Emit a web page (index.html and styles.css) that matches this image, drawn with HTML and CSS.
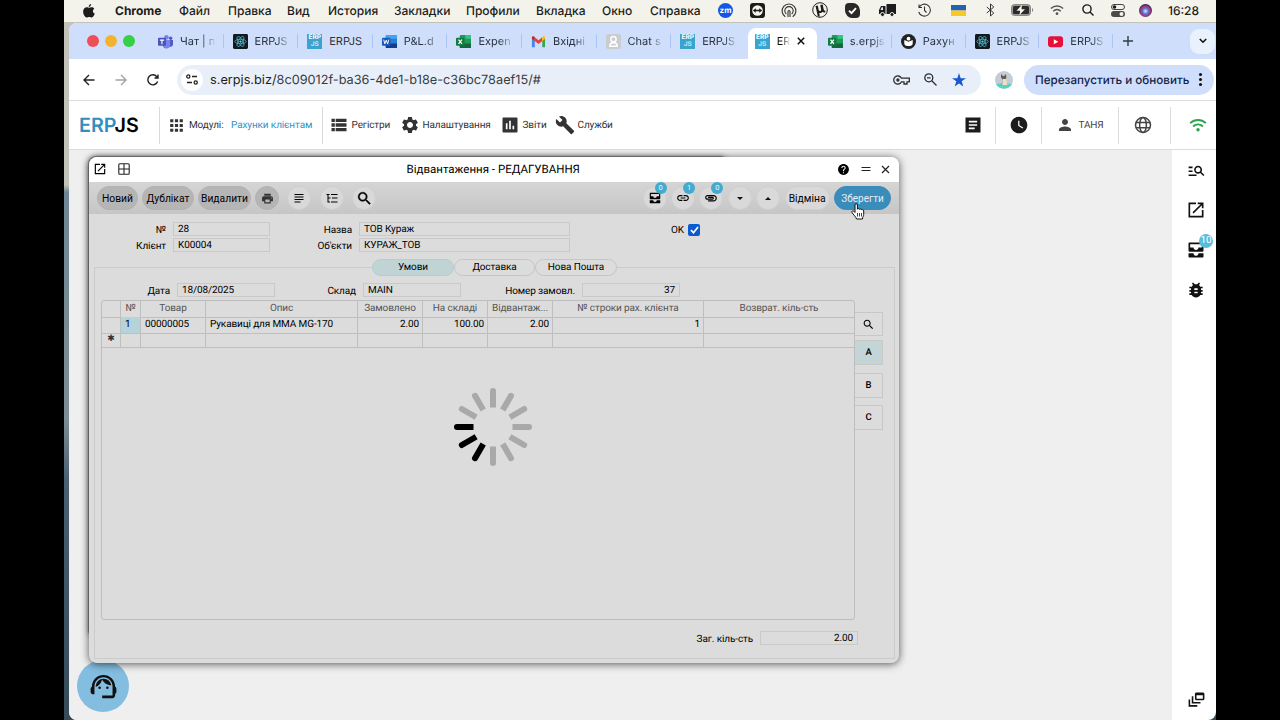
FILE: index.html
```html
<!DOCTYPE html>
<html lang="uk">
<head>
  <meta charset="UTF-8">
  <meta name="viewport" content="width=device-width, initial-scale=1.0">
  <title>ERPJS</title>
  <link rel="stylesheet" href="styles.css">
</head>
<body>
  <!-- Icon sprite -->
  <svg class="sprite">
    <symbol id="i-apps" viewBox="0 0 24 24"><path d="M4 8h4V4H4v4zm6 12h4v-4h-4v4zm-6 0h4v-4H4v4zm0-6h4v-4H4v4zm6 0h4v-4h-4v4zm6-10v4h4V4h-4zm-6 4h4V4h-4v4zm6 6h4v-4h-4v4zm0 6h4v-4h-4v4z"/></symbol>
    <symbol id="i-list" viewBox="0 0 24 24"><path d="M3 14h4v-4H3v4zm0 5.500h4v-4H3v4zM3 8.500h4v-4H3v4zm5 5.500h13v-4H8v4zm0 5.500h13v-4H8v4zM8 4.500v4h13v-4H8z"/></symbol>
    <symbol id="i-settings" viewBox="0 0 24 24"><path d="M19.140 12.940c.04-.3.06-.61.06-.94 0-.32-.02-.64-.07-.94l2.030-1.580c.18-.14.23-.41.12-.61l-1.920-3.320c-.12-.22-.37-.29-.59-.22l-2.390.96c-.5-.38-1.030-.7-1.620-.94l-.36-2.540c-.04-.24-.24-.41-.48-.41h-3.840c-.24 0-.43.17-.47.41l-.36 2.540c-.59.24-1.130.57-1.620.94l-2.390-.96c-.22-.08-.47 0-.59.22L2.740 8.870c-.12.21-.08.47.12.61l2.030 1.580c-.05.3-.09.63-.09.94s.02.64.07.94l-2.030 1.580c-.18.14-.23.41-.12.61l1.920 3.320c.12.22.37.29.59.22l2.390-.96c.5.38 1.030.7 1.620.94l.36 2.540c.05.24.24.41.48.41h3.840c.24 0 .44-.17.47-.41l.36-2.540c.59-.24 1.130-.56 1.620-.94l2.390.96c.22.08.47 0 .59-.22l1.920-3.320c.12-.22.07-.47-.12-.61l-2.010-1.580zM12 15.600c-1.980 0-3.600-1.620-3.600-3.600s1.620-3.600 3.600-3.600 3.600 1.620 3.600 3.600-1.620 3.600-3.600 3.600z"/></symbol>
    <symbol id="i-chart" viewBox="0 0 24 24"><path d="M20 3H4c-.6 0-1 .4-1 1v16c0 .6.4 1 1 1h16c.6 0 1-.4 1-1V4c0-.6-.4-1-1-1zM9 17H7v-7h2v7zm4 0h-2V7h2v10zm4 0h-2v-4h2v4z"/></symbol>
    <symbol id="i-build" viewBox="0 0 24 24"><path d="M22.700 19l-9.100-9.100c.9-2.300.4-5-1.500-6.900-2-2-5-2.400-7.400-1.300L9 6 6 9 1.600 4.700C.4 7.100.9 10.100 2.900 12.100c1.900 1.900 4.600 2.400 6.900 1.500l9.100 9.100c.4.4 1 .4 1.400 0l2.300-2.300c.5-.4.5-1.100.1-1.400z"/></symbol>
    <symbol id="i-article" viewBox="0 0 24 24"><path d="M21 3H3v18h18zM14 17H7v-2h7v2zm3-4H7v-2h10v2zm0-4H7V7h10v2z"/></symbol>
    <symbol id="i-clock" viewBox="0 0 24 24"><path d="M12 2C6.500 2 2 6.500 2 12s4.500 10 10 10 10-4.500 10-10S17.500 2 12 2zm4.200 14.200L11 13V7h1.500v5.200l4.500 2.700-.8 1.300z"/></symbol>
    <symbol id="i-person" viewBox="0 0 24 24"><path d="M12 12c2.210 0 4-1.790 4-4s-1.790-4-4-4-4 1.790-4 4 1.790 4 4 4zm0 2c-2.670 0-8 1.340-8 4v2h16v-2c0-2.660-5.330-4-8-4z"/></symbol>
    <symbol id="i-globe" viewBox="0 0 24 24"><g fill="none" stroke="currentColor" stroke-width="2"><circle cx="12" cy="12" r="10"/><ellipse cx="12" cy="12" rx="4.500" ry="10"/><path d="M2.500 8.500h19M2.500 15.500h19"/></g></symbol>
    <symbol id="i-wifi" viewBox="0 0 24 24"><g fill="none" stroke="currentColor" stroke-width="2.500"><path d="M1.500 9.500c6-5.600 15-5.600 21 0M5.500 14c3.800-3.600 9.200-3.600 13 0"/></g><circle cx="12" cy="18.300" r="2.300"/></symbol>
    <symbol id="i-msearch" viewBox="0 0 24 24"><path d="M7 9H2V7h5v2zm0 3H2v2h5v-2zm13.590 7l-3.830-3.830c-.8.52-1.740.83-2.760.83-2.760 0-5-2.240-5-5s2.240-5 5-5 5 2.240 5 5c0 1.020-.31 1.960-.83 2.750L22 17.590 20.590 19zM17 11c0-1.650-1.350-3-3-3s-3 1.350-3 3 1.350 3 3 3 3-1.350 3-3zM2 19h10v-2H2v2z"/></symbol>
    <symbol id="i-open" viewBox="0 0 24 24"><path d="M19 19H5V5h7V3H3v18h18v-9h-2v7zM14 3v2h3.590l-9.830 9.830 1.410 1.410L19 6.410V10h2V3h-7z"/></symbol>
    <symbol id="i-inbox" viewBox="0 0 24 24"><path d="M20 3H4c-.6 0-1 .4-1 1v9c0 .6.4 1 1 1h16c.6 0 1-.4 1-1V4c0-.6-.4-1-1-1zm-1 6h-4c0 1.620-1.380 3-3 3s-3-1.380-3-3H5V5h14v4zm-4 7h6v4c0 .6-.4 1-1 1H4c-.6 0-1-.4-1-1v-4h6c0 1.660 1.340 3 3 3s3-1.340 3-3z"/></symbol>
    <symbol id="i-bug" viewBox="0 0 24 24"><path d="M20 8h-2.810c-.45-.78-1.070-1.450-1.820-1.960L17 4.410 15.590 3l-2.170 2.170C12.960 5.060 12.490 5 12 5c-.49 0-.96.06-1.410.17L8.410 3 7 4.410l1.620 1.630C7.880 6.550 7.260 7.220 6.810 8H4v2h2.090c-.05.33-.09.66-.09 1v1H4v2h2v1c0 .34.04.67.09 1H4v2h2.810c1.040 1.790 2.970 3 5.190 3s4.150-1.210 5.190-3H20v-2h-2.090c.05-.33.09-.66.09-1v-1h2v-2h-2v-1c0-.34-.04-.67-.09-1H20V8zm-6 8h-4v-2h4v2zm0-4h-4v-2h4v2z"/></symbol>
    <symbol id="i-print" viewBox="0 0 24 24"><path d="M19 8H5c-1.660 0-3 1.340-3 3v6h4v4h12v-4h4v-6c0-1.660-1.340-3-3-3zm-3 11H8v-5h8v5zm3-7c-.55 0-1-.45-1-1s.45-1 1-1 1 .45 1 1-.45 1-1 1zm-1-9H6v4h12V3z"/></symbol>
    <symbol id="i-link" viewBox="0 0 24 24"><path d="M3.900 12c0-1.710 1.390-3.100 3.100-3.100h4V7H7c-2.760 0-5 2.240-5 5s2.240 5 5 5h4v-1.900H7c-1.710 0-3.100-1.390-3.100-3.100zM8 13h8v-2H8v2zm9-6h-4v1.900h4c1.710 0 3.100 1.390 3.100 3.100s-1.390 3.100-3.100 3.100h-4V17h4c2.760 0 5-2.240 5-5s-2.240-5-5-5z"/></symbol>
    <symbol id="i-clip" viewBox="0 0 24 24"><path d="M2 12.500C2 9.460 4.460 7 7.500 7H18c2.210 0 4 1.790 4 4s-1.790 4-4 4H9.500C8.120 15 7 13.880 7 12.500S8.120 10 9.500 10H17v2H9.410c-.55 0-.55 1 0 1H18c1.100 0 2-.9 2-2s-.9-2-2-2H7.500C5.570 9 4 10.570 4 12.500S5.570 16 7.500 16H17v2H7.500C4.460 18 2 15.540 2 12.500z"/></symbol>
    <symbol id="i-search" viewBox="0 0 24 24"><path d="M15.500 14h-.79l-.28-.27C15.410 12.590 16 11.110 16 9.500 16 5.910 13.090 3 9.500 3S3 5.910 3 9.500 5.910 16 9.500 16c1.610 0 3.090-.59 4.230-1.570l.27.28v.79l5 4.990L20.490 19l-4.990-5zm-6 0C7.010 14 5 11.990 5 9.500S7.010 5 9.500 5 14 7.010 14 9.500 11.990 14 9.500 14z"/></symbol>
    <symbol id="i-lines" viewBox="0 0 24 24"><path d="M3 4h18v2H3zM3 9h18v2H3zM3 14h18v2H3zM3 19h12v2H3z"/></symbol>
    <symbol id="i-tree" viewBox="0 0 24 24"><path d="M1 4h6v2H1zM10 4h13v2H10zM12 11h11v2H12zM10 19h13v2H10zM3 5h2v16H3zM3 11h6v2H3zM3 19h5v2H3z"/></symbol>
    <symbol id="i-agent" viewBox="0 0 24 24"><path d="M21 12.220C21 6.730 16.740 3 12 3c-4.690 0-9 3.650-9 9.280-.6.34-1 .98-1 1.720v2c0 1.100.9 2 2 2h1v-6.100c0-3.870 3.130-7 7-7s7 3.130 7 7V19h-8v2h8c1.100 0 2-.9 2-2v-1.220c.59-.31 1-.92 1-1.640v-2.300c0-.7-.41-1.310-1-1.620z"/><circle cx="9" cy="13" r="1"/><circle cx="15" cy="13" r="1"/><path d="M18 11.030C17.520 8.180 15.040 6 12.050 6c-3.030 0-6.290 2.510-6.030 6.450 2.470-1.010 4.330-3.210 4.860-5.890 1.310 2.630 4 4.440 7.120 4.470z"/></symbol>
    <symbol id="i-feed" viewBox="0 0 24 24"><path d="M8 8H6v9h11v-2H8V8zM20 3h-8c-1.100 0-2 .9-2 2v6c0 1.100.9 2 2 2h8c1.100 0 2-.9 2-2V5c0-1.100-.9-2-2-2zm0 8h-8V6.500h8V11zM4 12H2v9h11v-2H4v-7z"/></symbol>
    <symbol id="i-help" viewBox="0 0 24 24"><path d="M12 2C6.480 2 2 6.480 2 12s4.480 10 10 10 10-4.480 10-10S17.520 2 12 2zm1 17h-2v-2h2v2zm2.070-7.750l-.9.920C13.450 12.900 13 13.500 13 15h-2v-.5c0-1.100.45-2.100 1.170-2.830l1.240-1.260c.37-.36.59-.86.59-1.410 0-1.100-.9-2-2-2s-2 .9-2 2H8c0-2.210 1.790-4 4-4s4 1.790 4 4c0 .88-.36 1.680-.93 2.250z"/></symbol>
    <symbol id="i-excel" viewBox="0 0 16 16"><rect x="4" y="1" width="12" height="14" rx="1" fill="#1f9a58"/><path d="M10 1h5a1 1 0 0 1 1 1v3h-6z" fill="#35c481"/><path d="M4 10h12v4a1 1 0 0 1-1 1H5a1 1 0 0 1-1-1z" fill="#15683c"/><rect y="4" width="9" height="8.500" rx="1" fill="#107c41"/><path d="M2.700 6l3.600 4.600M6.300 6L2.700 10.600" stroke="#fff" stroke-width="1.400"/></symbol>
    <symbol id="i-react" viewBox="0 0 16 16"><rect width="16" height="16" rx="1.500" fill="#14191d"/><g fill="none" stroke="#4fb3c4" stroke-width=".9"><ellipse cx="8" cy="8" rx="6" ry="2.400"/><ellipse cx="8" cy="8" rx="6" ry="2.400" transform="rotate(60 8 8)"/><ellipse cx="8" cy="8" rx="6" ry="2.400" transform="rotate(120 8 8)"/></g><circle cx="8" cy="8" r="1.200" fill="#61dafb"/></symbol>
  </svg>

  <div class="screen">
    <header class="menubar">
      <svg class="apple" width="12" height="14" viewBox="0 0 12 14"><path d="M8.100 0c.1 1.500-1.100 2.900-2.400 2.900C5.500 1.500 6.800.2 8.100 0zM11.300 4.700c-2.100 1.300-1.700 4 .5 4.900-.5 1.500-1.700 3.900-3 3.900-1 0-1.300-.6-2.500-.6s-1.600.6-2.500.6C2 13.500.1 10.300.1 7.500c0-4 3.700-5 5.200-3.900.8.300 1 .3 1.800 0 1.300-.6 3.200-.4 4.200 1.100z"/></svg>
      <nav class="menu">
        <strong>Chrome</strong>
        <span>Файл</span>
        <span>Правка</span>
        <span>Вид</span>
        <span>История</span>
        <span>Закладки</span>
        <span>Профили</span>
        <span>Вкладка</span>
        <span>Окно</span>
        <span>Справка</span>
      </nav>
      <div class="status">
        <span class="zoom-app">zm</span>
        <svg width="15" height="15" viewBox="0 0 15 15"><rect width="15" height="15" rx="3" fill="#1c1c1a"/><circle cx="7.500" cy="7.500" r="5.300" fill="#f4f3ec"/><path d="M2.800 7.500l3-2.300v1.500h3.400V5.200l3 2.300-3 2.300V8.300H5.800v1.500z"/></svg>
        <svg width="16" height="15" viewBox="0 0 16 15" fill="none" stroke="#333" stroke-width="1.100"><path d="M4.300 13.700a6.900 6.900 0 1 1 7.400 0M5.300 11a4.200 4.200 0 1 1 5.400 0M7 14V8.500a1 1 0 0 1 2 0V14"/></svg>
        <svg width="16" height="16" viewBox="0 0 16 16"><circle cx="8" cy="8" r="7.300" fill="none" stroke="#222"/><path d="M3.500 4l2.300-.4.900 4.500c.3 1.500 2.600 1.300 2.400-.3L8.300 3l2.400-.4 1 5c.2 1 .7 1.200 1.400 1l.4 1.400c-1 .8-2.300.7-3-.2-1 1.400-2.500 1.500-3.300.9l.6 4-2-.4z"/></svg>
        <svg width="15" height="15" viewBox="0 0 15 15"><path d="M0 4a4 4 0 0 1 4-4h3a7.500 7.500 0 0 1 8 7.500V11a4 4 0 0 1-4 4H8a7.500 7.500 0 0 1-8-7.500z" fill="#292927"/><path d="M4 7.700l2.500 2.500L11 5.200" fill="none" stroke="#fff" stroke-width="1.900"/></svg>
        <svg width="17" height="14" viewBox="0 0 17 14"><path d="M7.500 1H17v10H7.500zM0 7l2-4h4.500v8H0z"/><path d="M1.500 7l1.200-2.700H4V7z" fill="#eee"/><circle cx="3.500" cy="11.500" r="2" stroke="#eee"/><circle cx="13" cy="11.500" r="2" stroke="#eee"/></svg>
        <svg width="14" height="14" viewBox="0 0 14 14" fill="none" stroke="#333" stroke-width="1.100"><path d="M2 4.500A6 6 0 1 1 1.700 9M2 1.500v3h3M7.500 3.500V7.500l2 2"/></svg>
        <svg width="15" height="11" viewBox="0 0 15 11"><path d="M0 0h15v5.500H0z" fill="#1f63b5"/><path d="M0 5.500h15V11H0z" fill="#f6c927"/></svg>
        <svg width="9" height="14" viewBox="0 0 9 14" fill="none" stroke="#333"><path d="M.8 4l7 6-3.300 3V1l3.300 3-7 6"/></svg>
        <svg width="23" height="12" viewBox="0 0 23 12"><rect x=".5" y=".5" width="19" height="11" rx="3" fill="#999" stroke="#888"/><rect x="2" y="2" width="16" height="8" rx="1.500" fill="#2a2a28"/><path d="M21 4c1.600.5 1.600 3.500 0 4z" fill="#888"/><path d="M11 .8L5.500 6.700h3.600L8.500 11 14 5.300h-3.500z" fill="#f4f3ec"/></svg>
        <svg width="16" height="14" viewBox="0 0 24 24"><use href="#i-wifi" class="dim"/></svg>
        <svg width="12" height="12" viewBox="0 0 12 12" fill="none" stroke="#1c1c1a" stroke-width="1.400"><circle cx="5" cy="5" r="4.100"/><path d="M8 8l3.500 3.500"/></svg>
        <svg width="14" height="13" viewBox="0 0 14 13"><rect x=".5" y=".5" width="13" height="5" rx="2.500" fill="none" stroke="#444"/><circle cx="3.500" cy="3" r="1.800"/><rect y="7" width="14" height="6" rx="3" fill="#4a4a48"/><circle cx="10.500" cy="10" r="2" fill="#f4f3ec"/></svg>
        <span class="siri"></span>
        <time>16:28</time>
      </div>
    </header>

    <div class="browser">
      <div class="tabstrip">
        <div class="lights"><i class="red"></i><i class="yellow"></i><i class="green"></i></div>
        <div class="tab">
          <svg class="fav" viewBox="0 0 16 16"><circle cx="9" cy="3.500" r="2.500" fill="#7b83eb"/><circle cx="13.500" cy="4.500" r="1.800" fill="#5059c9"/><path d="M11 6.500h5v4.500a3 3 0 0 1-4 2.500z" fill="#5059c9"/><path d="M5 6.500h8V11a4 4 0 0 1-8 1z" fill="#7b83eb"/><rect y="4" width="8.500" height="8.500" rx="1" fill="#4b53bc"/><path d="M2 6.500h4.500M4.200 6.500v4.300" stroke="#fff" stroke-width="1.200"/></svg>
          <span>Чат | п</span>
        </div>
        <div class="tab"><svg class="fav"><use href="#i-react"/></svg><span>ERPJS</span></div>
        <div class="tab"><b class="fav erp">ERP<br><i>JS</i></b><span class="full">ERPJS</span></div>
        <div class="tab">
          <svg class="fav" viewBox="0 0 16 16"><rect x="4" y="1" width="12" height="14" rx="1" fill="#2b7cd3"/><path d="M4 2a1 1 0 0 1 1-1h10a1 1 0 0 1 1 1v3H4z" fill="#41a5ee"/><path d="M4 10h12v4a1 1 0 0 1-1 1H5a1 1 0 0 1-1-1z" fill="#103f91"/><rect y="4" width="9" height="8.500" rx="1" fill="#185abd"/><path d="M1.800 6l1.200 4.500L4.500 6.500 6 10.500 7.200 6" fill="none" stroke="#fff"/></svg>
          <span>P&amp;L.d</span>
        </div>
        <div class="tab"><svg class="fav"><use href="#i-excel"/></svg><span>Expen</span></div>
        <div class="tab">
          <svg class="fav" viewBox="0 0 16 16"><path d="M1 4v10h3V7z" fill="#4285f4"/><path d="M15 4v10h-3V7z" fill="#34a853"/><path d="M4 3.500l4 3.200 4-3.200v4L8 10.600 4 7.500z" fill="#ea4335"/><path d="M1 4c0-1.600 1.800-2 3-.8v4.300L1 5z" fill="#c5221f"/><path d="M15 4c0-1.600-1.800-2-3-.8v4.300L15 5z" fill="#fbbc04"/></svg>
          <span>Вхідні</span>
        </div>
        <div class="tab">
          <svg class="fav" viewBox="0 0 16 16"><rect width="16" height="16" rx="2.500" fill="#c9cdd0"/><g fill="none" stroke="#fff" stroke-width="1.500"><circle cx="8" cy="5.500" r="2.800"/><path d="M4 13c0-5 8-5 8 0z"/></g></svg>
          <span>Chat s</span>
        </div>
        <div class="tab last"><b class="fav erp">ERP<br><i>JS</i></b><span>ERPJS</span></div>
        <div class="tab active"><b class="fav erp">ERP<br><i>JS</i></b><span>ER</span>
          <svg class="close" width="8" height="8" viewBox="0 0 8 8"><path d="M.8.8l6.400 6.400M7.200.8L.8 7.200"/></svg>
        </div>
        <div class="tab"><svg class="fav"><use href="#i-excel"/></svg><span>s.erpjs</span></div>
        <div class="tab">
          <svg class="fav" viewBox="0 0 16 16"><circle cx="8" cy="8" r="8" fill="#222"/><path d="M3.500 6.500L8 8.300l4.500-1.800v3.500c0 3.800-9 3.800-9 0z" fill="#fff"/><circle cx="8" cy="5" r="2" fill="#fff"/></svg>
          <span>Рахун</span>
        </div>
        <div class="tab"><svg class="fav"><use href="#i-react"/></svg><span>ERPJS</span></div>
        <div class="tab">
          <svg class="fav" viewBox="0 0 16 16"><rect y="2.500" width="16" height="11.500" rx="3" fill="#e5113b"/><path d="M6.200 5.500v5.400L11 8.200z" fill="#fff"/></svg>
          <span>ERPJS</span>
        </div>
        <svg class="plus" width="10" height="10" viewBox="0 0 10 10"><path d="M5 0v10M0 5h10"/></svg>
        <div class="tab-search"><svg width="8" height="6" viewBox="0 0 8 6"><path d="M.8 1l3.200 3.200L7.200 1"/></svg></div>
      </div>

      <div class="toolbar">
        <svg class="nav-icon" width="12" height="12" viewBox="0 0 12 12"><path d="M11.500 6H1M6 1L1 6l5 5"/></svg>
        <svg class="nav-icon faded" width="12" height="12" viewBox="0 0 12 12"><path d="M.5 6H11M6 1l5 5-5 5"/></svg>
        <svg class="nav-icon" width="12" height="12" viewBox="0 0 12 12"><path d="M10.600 7.500A5 5 0 1 1 9.800 2.700L11 4M11 .5V4H7.500"/></svg>
        <div class="omnibox">
          <div class="site-info"><svg width="12" height="11" viewBox="0 0 12 11" fill="none" stroke="#222" stroke-width="1.300"><circle cx="2.300" cy="2.500" r="1.600"/><path d="M6 2.500h5M1 8.500h5"/><circle cx="9.700" cy="8.500" r="1.600"/></svg></div>
          <span class="url">s.erpjs.biz/<em>8c09012f-ba36-4de1-b18e-c36bc78aef15/#</em></span>
          <svg class="key" width="17" height="10" viewBox="0 0 17 10" fill="none" stroke="#2b2d30" stroke-width="1.300"><path d="M8.500 3.200A4.100 4.100 0 1 0 8.500 6.800H11V9h3V6.800h2.300V3.200z"/><circle cx="4.900" cy="5" r="1" fill="#2b2d30"/></svg>
          <svg class="lens" width="13" height="13" viewBox="0 0 13 13" fill="none" stroke="#2b2d30" stroke-width="1.300"><circle cx="4.800" cy="4.800" r="4"/><path d="M7.800 7.800l4.700 4.700M3 4.800h3.600"/></svg>
          <svg class="star" width="14" height="14" viewBox="0 0 24 24"><path d="M12 17.800L19.400 23l-2.800-8.700L24 9h-9.100L12 0 9.100 9H0l7.400 5.300L4.600 23z"/></svg>
        </div>
        <svg class="avatar" width="18" height="18" viewBox="0 0 18 18"><circle cx="9" cy="9" r="9" fill="#c5ccd8"/><path d="M1 13c5-1 11-1 16 0-3 6-13 6-16 0z" fill="#57d3c4"/><path d="M6 3l2 2h1l2-2 .4 4-1.400 2 2.500 5H6.500L8 9 6 6.500z" fill="#6c5c50"/><path d="M8 8h3l1.500 6H7z" fill="#eadfc8"/></svg>
        <div class="relaunch">Перезапустить и обновить <i class="dots"></i></div>
      </div>

      <div class="app-header">
        <div class="logo">ERP<b>JS</b></div>
        <div class="modules"><svg width="19" height="19"><use href="#i-apps"/></svg><span>Модулі:</span><a>Рахунки клієнтам</a></div>
        <nav class="app-nav">
          <a><svg width="20" height="20"><use href="#i-list"/></svg>Регістри</a>
          <a><svg width="20" height="20"><use href="#i-settings"/></svg>Налаштування</a>
          <a><svg width="20" height="20"><use href="#i-chart"/></svg>Звіти</a>
          <a class="services"><svg width="20" height="20"><use href="#i-build"/></svg>Служби</a>
        </nav>
        <div class="cell"><svg width="20" height="20"><use href="#i-article"/></svg></div>
        <div class="cell"><svg width="20" height="20"><use href="#i-clock"/></svg></div>
        <div class="cell user"><svg width="18" height="18"><use href="#i-person"/></svg>ТАНЯ</div>
        <div class="cell"><svg width="18" height="18"><use href="#i-globe"/></svg></div>
        <div class="cell wifi"><svg width="18" height="18"><use href="#i-wifi"/></svg></div>
      </div>

      <div class="workspace">
        <div class="desk">
          <div class="back-window"></div>
          <section class="window">
            <div class="titlebar">
              <svg width="14" height="14"><use href="#i-open"/></svg>
              <svg width="12" height="12" viewBox="0 0 12 12" fill="none" stroke="#222" stroke-width="1.100"><rect x=".8" y=".8" width="10.400" height="10.400" rx="1"/><path d="M6 1v10M1 6h10"/></svg>
              <h1>Відвантаження - РЕДАГУВАННЯ</h1>
              <svg width="13" height="13"><use href="#i-help"/></svg>
              <svg width="10" height="10" viewBox="0 0 10 10" stroke="#222" stroke-width="1.200"><path d="M.5 3.500h9M.5 6.500h9"/></svg>
              <svg width="9" height="9" viewBox="0 0 9 9" stroke="#222" stroke-width="1.200"><path d="M1 1l7 7M8 1L1 8"/></svg>
            </div>

            <div class="actions">
              <button class="btn dark w-new">Новий</button>
              <button class="btn dark w-dup">Дублікат</button>
              <button class="btn dark w-del">Видалити</button>
              <button class="btn dark round"><svg width="13" height="13"><use href="#i-print"/></svg></button>
              <button class="btn round gap"><svg width="12" height="12"><use href="#i-lines"/></svg></button>
              <button class="btn round gap"><svg width="14" height="12" viewBox="0 0 24 24"><use href="#i-tree"/></svg></button>
              <button class="btn round gap bold"><svg width="17" height="17"><use href="#i-search"/></svg></button>
              <div class="actions-right">
                <button class="btn round"><svg width="14" height="14"><use href="#i-inbox"/></svg><span class="badge">0</span></button>
                <button class="btn round"><svg width="14" height="14"><use href="#i-link"/></svg><span class="badge">1</span></button>
                <button class="btn round"><svg class="flip" width="14" height="14"><use href="#i-clip"/></svg><span class="badge">0</span></button>
                <button class="btn round"><i class="down"></i></button>
                <button class="btn round"><i class="up"></i></button>
                <button class="btn w-cancel">Відміна</button>
                <button class="btn save">Зберегти
                  <svg class="cursor" width="15" height="17" viewBox="0 0 15 17"><path d="M4 9.500V2a1.200 1.200 0 0 1 2.400 0v4.200c.3-.8 1.900-.8 2.200.2.400-.7 1.800-.5 2.100.4.700-.5 2-.1 2 1.200v3.500c0 1.700-1.200 2.400-1.200 4.500H5.500C5 13.800 2.200 11.600 1 9.400.4 8 2 7.300 2.800 8.200z" fill="#fff" stroke="#111"/><path d="M6.500 10v3.500M8.500 10v3.500M10.500 10v3.500" stroke="#111" stroke-width=".8"/></svg>
                </button>
              </div>
            </div>

            <div class="form">
              <div class="head-fields">
                <label>№</label><div class="field">28</div>
                <label>Назва</label><div class="field">ТОВ Кураж</div>
                <label>OK</label><span class="check"><svg width="9" height="8" viewBox="0 0 9 8"><path d="M1 4.200l2.500 2.500L8 1"/></svg></span>
                <label>Клієнт</label><div class="field">K00004</div>
                <label>Об'єкти</label><div class="field">КУРАЖ_ТОВ</div>
              </div>

              <div class="panel">
                <div class="tabs">
                  <div class="pill selected">Умови</div>
                  <div class="pill">Доставка</div>
                  <div class="pill">Нова Пошта</div>
                </div>

                <div class="row-fields">
                  <label>Дата</label><div class="field">18/08/2025</div>
                  <label>Склад</label><div class="field">MAIN</div>
                  <label>Номер замовл.</label><div class="field num">37</div>
                </div>

                <div class="grid-area">
                  <div class="grid">
                    <div class="tr th"><span></span><span>№</span><span>Товар</span><span>Опис</span><span>Замовлено</span><span>На складі</span><span>Відвантаж...</span><span>№ строки рах. клієнта</span><span>Возврат. кіль-сть</span></div>
                    <div class="tr"><span></span><span class="sel">1</span><span>00000005</span><span>Рукавиці для MMA MG-170</span><span class="num">2.00</span><span class="num">100.00</span><span class="num">2.00</span><span class="num">1</span><span></span></div>
                    <div class="tr new"><span>✱</span><span></span><span></span><span></span><span></span><span></span><span></span><span></span><span></span></div>
                  </div>
                  <div class="side-tabs">
                    <div><svg width="13" height="13"><use href="#i-search"/></svg></div>
                    <div class="selected">A</div>
                    <div>B</div>
                    <div>C</div>
                  </div>
                </div>

                <div class="total"><label>Заг. кіль-сть</label><div class="field num">2.00</div></div>
              </div>
            </div>

            <svg class="spinner" width="80" height="80" viewBox="-40 -40 80 80">
              <defs><path id="blade" d="M19.500-3H36a3 3 0 0 1 0 6H19.500z"/></defs>
              <g fill="#a9a9a9">
                <use href="#blade"/>
                <use href="#blade" transform="rotate(30)"/>
                <use href="#blade" transform="rotate(60)"/>
                <use href="#blade" transform="rotate(90)"/>
                <use href="#blade" transform="rotate(210)"/>
                <use href="#blade" transform="rotate(240)"/>
                <use href="#blade" transform="rotate(270)"/>
                <use href="#blade" transform="rotate(300)"/>
                <use href="#blade" transform="rotate(330)"/>
              </g>
              <g fill="#000">
                <use href="#blade" transform="rotate(120)"/>
                <use href="#blade" transform="rotate(150)"/>
                <use href="#blade" transform="rotate(180)"/>
              </g>
            </svg>
          </section>
          <div class="support"><svg width="31" height="31"><use href="#i-agent"/></svg></div>
        </div>
        <aside class="rail">
          <svg width="19" height="19"><use href="#i-msearch"/></svg>
          <svg width="20" height="20"><use href="#i-open"/></svg>
          <div class="rail-inbox"><svg width="20" height="20"><use href="#i-inbox"/></svg><span>10</span></div>
          <svg width="20" height="20"><use href="#i-bug"/></svg>
          <svg class="feed" width="19" height="19"><use href="#i-feed"/></svg>
        </aside>
      </div>
    </div>
  </div>
</body>
</html>
```

FILE: styles.css
```css
* {
  box-sizing: border-box;
}

body {
  margin: 0;
  height: 720px;
  overflow: hidden;
  background: #000;
  font-family: Roboto, "Liberation Sans", sans-serif;
  text-rendering: geometricPrecision;
  color: #111;
}

.sprite {
  display: none;
}

svg {
  display: block;
  flex: none;
}

svg:not([fill]) {
  fill: currentColor;
}

.screen {
  width: 1152px;
  height: 720px;
  margin: 0 64px;
  background: linear-gradient(#c3c2b8 0, #c3c2b8 185px, #6f8794 192px, #7d8c93 420px, #4a6070 480px, #354b58 720px);
}

/* macOS menu bar */
.menubar {
  display: flex;
  align-items: center;
  height: 22px;
  padding: 0 0 2px 19px;
  background: #f3f2eb;
  font-family: Inter, sans-serif;
  font-size: 12px;
  color: #1c1c1a;
}

.apple {
  margin-right: 20px;
  margin-top: 1px;
}

.menu {
  display: grid;
  grid-template-columns: 64px 49px 59px 41px 66px 72px 70px 66px 48px 60px;
  font-weight: 500;
  white-space: nowrap;
}

.menu strong {
  font-weight: 700;
}

.status {
  display: grid;
  grid-template-columns: 31px 32px 31px 32px 33px 37px 36px 33px 30px 35px 33px 30px 29px 27px 49px;
  align-items: center;
  justify-items: center;
}

.status time {
  font-weight: 500;
}

.dim {
  color: #555;
}

.zoom-app {
  width: 15px;
  height: 15px;
  border-radius: 50%;
  background: #1457e6;
  color: #fff;
  font-size: 8px;
  font-weight: 700;
  line-height: 14px;
  text-align: center;
}

.siri {
  width: 13px;
  height: 13px;
  border-radius: 50%;
  background: radial-gradient(circle at 50% 55%, #e8e6ff 0, #5a6fd8 30%, #a03c78 50%, #1b1f4d 75%);
}

/* Browser */
.browser {
  display: flex;
  flex-direction: column;
  height: 697px;
  margin: 1px 0 0 5px;
  border-radius: 8px 0 8px 8px;
  overflow: hidden;
  background: #fff;
}

.tabstrip {
  display: flex;
  align-items: center;
  height: 36px;
  background: #cfdefa;
  font-family: Inter, sans-serif;
  font-size: 11px;
  color: #2c3341;
}

.lights {
  display: flex;
  gap: 6px;
  width: 80px;
  padding-left: 18px;
}

.lights i {
  width: 12px;
  height: 12px;
  border-radius: 50%;
}

.red {
  background: #ee4e56;
}

.yellow {
  background: #f3b32f;
}

.green {
  background: #35d044;
}

.tab {
  display: flex;
  align-items: center;
  width: 74.6px;
  height: 14px;
  padding-left: 9px;
  border-right: 1.500px solid #a9c6f5;
}

.tab span {
  width: 36px;
  margin-left: 7px;
  overflow: hidden;
  white-space: nowrap;
  -webkit-mask-image: linear-gradient(90deg, #000 60%, transparent);
  mask-image: linear-gradient(90deg, #000 60%, transparent);
}

.tab span.full {
  -webkit-mask-image: none;
  mask-image: none;
}

.tab.last {
  border-right-color: transparent;
}

.tab.active {
  width: 69px;
  height: 31px;
  margin: 5px 4px 0 2px;
  padding: 0 0 5px 7px;
  border: 0;
  border-radius: 8px 8px 0 0;
  background: #fff;
  color: #111;
}

.tab.active span {
  width: 15px;
  -webkit-mask-image: linear-gradient(90deg, #000 30%, transparent 90%);
  mask-image: linear-gradient(90deg, #000 30%, transparent 90%);
}

.tab.active ~ .tab {
  width: 73.8px;
}

.tab.active + .tab {
  width: 71px;
  padding-left: 7px;
}

.close {
  margin-left: 5px;
  stroke: #111;
  stroke-width: 1.500;
}

.fav {
  flex: none;
  width: 15px;
  height: 15px;
}

.erp {
  background: #3aa3cf;
  color: #fff;
  font-size: 6.500px;
  line-height: 7px;
  text-align: center;
}

.erp i {
  font-style: normal;
  color: #bfe6ef;
}

.plus {
  margin-left: 10px;
  stroke: #333b48;
  stroke-width: 1.400;
}

.tab-search {
  display: grid;
  place-items: center;
  width: 25px;
  height: 25px;
  margin: 0 1px 0 auto;
  border-radius: 9px;
  background: #e9f1fd;
}

.tab-search svg {
  fill: none;
  stroke: #111;
  stroke-width: 1.600;
}

.toolbar {
  display: flex;
  align-items: center;
  height: 42px;
  padding-left: 14px;
  border-bottom: 1px solid #dedede;
  font-family: Inter, sans-serif;
}

.toolbar .nav-icon {
  margin-right: 20px;
  fill: none;
  stroke: #222;
  stroke-width: 1.400;
}

.toolbar .nav-icon.faded {
  stroke: #a3a3a3;
}

.omnibox {
  display: flex;
  align-items: center;
  width: 804px;
  height: 30px;
  margin-left: -2px;
  padding-left: 4px;
  border-radius: 15px;
  background: #e9eff9;
  font-size: 12.720px;
  color: #1d1f22;
}

.site-info {
  display: grid;
  place-items: center;
  width: 22px;
  height: 22px;
  margin-right: 7px;
  border-radius: 50%;
  background: #fff;
}

.url {
  width: 683px;
  padding-top: 1px;
}

.url em {
  font-style: normal;
  color: #393c41;
}

.key {
  margin-right: 14px;
}

.lens {
  margin-right: 15px;
}

.omnibox .star {
  fill: #1d57cf;
}

.avatar {
  margin: 0 11px 0 14px;
}

.relaunch {
  display: flex;
  align-items: center;
  flex: 1;
  height: 30px;
  margin-right: 2px;
  padding-left: 11px;
  border-radius: 15px;
  background: #cfdefa;
  font-size: 11.650px;
  font-weight: 500;
  white-space: nowrap;
  color: #14234a;
}

.dots {
  width: 3px;
  height: 3px;
  margin-left: 10px;
  border-radius: 50%;
  background: #111;
  box-shadow: 0 -5px #111, 0 5px #111;
}

/* Application header */
.app-header {
  display: flex;
  align-items: center;
  height: 49px;
  border-bottom: 1px solid #dcdcdc;
  font-size: 10px;
  letter-spacing: -.12px;
  color: #333;
}

.logo {
  width: 91px;
  height: 37px;
  padding-left: 10px;
  border-right: 1px solid #d9d9d9;
  font-family: Inter, sans-serif;
  font-size: 19.700px;
  font-weight: 600;
  letter-spacing: 0;
  line-height: 36px;
  color: #328fc0;
}

.logo b {
  font-weight: 600;
  color: #000;
}

.modules {
  display: flex;
  align-items: center;
  width: 163px;
  height: 37px;
  padding-left: 7px;
  border-right: 1px solid #d9d9d9;
  white-space: nowrap;
}

.modules span {
  width: 42px;
  margin-left: 3px;
}

.modules a {
  color: #3391c5;
}

.app-nav {
  display: grid;
  grid-template-columns: 71px 100px 54px 60px;
  width: 627px;
  padding-left: 6px;
}

.app-nav a {
  display: flex;
  align-items: center;
  gap: 2.500px;
  white-space: nowrap;
}

.app-nav .services {
  padding-left: 1px;
}

.cell {
  display: flex;
  align-items: center;
  justify-content: center;
  gap: 4px;
  width: 46px;
  height: 37px;
  border-right: 1px solid #dcdcdc;
  color: #1c1c1c;
}

.cell.user {
  width: 77px;
  color: #444;
}

.user + .cell {
  width: 52px;
  padding-right: 4px;
  color: #444;
}

.cell.wifi {
  flex: 1;
  padding-left: 8px;
  border: 0;
  color: #2fa24e;
}

/* Workspace */
.workspace {
  display: flex;
  flex: 1;
  min-height: 0;
}

.desk {
  position: relative;
  width: 1103px;
  padding: 7px 0 0 20px;
  background: #efefef;
}

.back-window {
  position: absolute;
  left: 19px;
  top: 6px;
  width: 640px;
  height: 482px;
  border-radius: 8px;
  background: #888;
  box-shadow: 0 0 5px rgba(0, 0, 0, 0.4);
}

.window {
  position: relative;
  display: flex;
  flex-direction: column;
  width: 810px;
  height: 506px;
  border-radius: 8px;
  background: #dcdcdc;
  box-shadow: 0 1px 8px rgba(0, 0, 0, 0.65);
  font-size: 10px;
  letter-spacing: -.12px;
  color: #000;
  z-index: 2;
}

.titlebar {
  display: flex;
  align-items: center;
  flex: none;
  height: 25px;
  padding: 0 9px 1px 4px;
  border-radius: 8px 8px 0 0;
  background: #fff;
  gap: 10.500px;
}

.titlebar h1 {
  flex: 1;
  margin: 0;
  padding-left: 20px;
  font-size: 11.500px;
  font-weight: 400;
  letter-spacing: 0;
  text-align: center;
}

.actions {
  display: flex;
  align-items: center;
  flex: none;
  height: 32px;
  padding: 0 8px;
  background: linear-gradient(#d5d5d5, #c6c6c6);
}

.btn {
  position: relative;
  display: grid;
  place-items: center;
  height: 24px;
  margin-right: 4px;
  padding: 0;
  border: 1px solid #cfcfcf;
  border-radius: 12px;
  background: #d9d9d9;
  font-family: inherit;
  font-size: 10.300px;
  font-weight: 400;
  letter-spacing: 0;
  color: #000;
}

.btn.dark {
  border-color: #b2b2b2;
  background: #b5b5b5;
}

.btn.round {
  width: 24px;
}

.round.dark {
  color: #333;
}

.btn.gap {
  margin-left: 4px;
  margin-right: 4.500px;
}

.bold svg {
  stroke: #111;
  stroke-width: .6;
}

.w-new {
  width: 41px;
}

.w-dup {
  width: 52px;
}

.w-del {
  width: 53px;
}

.w-cancel {
  width: 45px;
}

.actions-right {
  display: flex;
  margin-left: auto;
  gap: .4px;
}

.btn.save {
  width: 57px;
  margin-right: 0;
  border-color: #3a8cbb;
  background: #3a8cbb;
  font-size: 10px;
  color: #e4eef4;
}

.badge {
  position: absolute;
  top: -5px;
  right: -1px;
  width: 12px;
  height: 12px;
  border-radius: 50%;
  background: #43acce;
  color: #eaf6fa;
  font-size: 7.500px;
  font-weight: 400;
  line-height: 12px;
}

.flip {
  transform: scaleX(-1);
}

.down {
  border: 3px solid transparent;
  border-top-color: #111;
  border-bottom: 0;
}

.up {
  border: 3px solid transparent;
  border-bottom-color: #111;
  border-top: 0;
}

.cursor {
  position: absolute;
  left: 16px;
  top: 16px;
}

/* Form */
.form {
  padding: 8px 4px 4px 5px;
}

.form label {
  height: 15px;
  padding-top: 2px;
  line-height: 14px;
  text-align: right;
  white-space: nowrap;
}

.field {
  height: 14px;
  padding: 0 4px;
  border: 1px solid #c9c9c9;
  line-height: 14px;
}

.head-fields {
  display: grid;
  grid-template-columns: 72px 97px 89px 211px 121px 20px;
  row-gap: 1px;
}

.head-fields .field {
  margin-left: 7px;
  margin-right: -7px;
}

.check {
  display: grid;
  place-items: center;
  width: 12px;
  height: 12px;
  margin: 2px 0 0 4px;
  border-radius: 2px;
  background: #0a5bd0;
}

.check svg {
  fill: none;
  stroke: #fff;
  stroke-width: 1.700;
}

.panel {
  height: 392px;
  margin-top: 14px;
  border: 1px solid #cbcbcb;
}

.tabs {
  display: flex;
  justify-content: center;
  margin-top: -9px;
}

.pill {
  width: 81.500px;
  height: 17px;
  border: 1px solid #c6c6c6;
  border-radius: 9px;
  background: #dcdcdc;
  line-height: 16px;
  text-align: center;
}

.pill.selected {
  border-color: #b8cccf;
  background: #c0d3d5;
}

.row-fields {
  display: grid;
  grid-template-columns: 75px 98px 88px 98px 121px 98px;
  margin-top: 7px;
}

.row-fields .field {
  margin-left: 7px;
  margin-right: -7px;
}

.field.num {
  text-align: right;
}

.grid-area {
  display: flex;
  margin: 2px 0 0 6px;
}

.grid {
  width: 754px;
  height: 320px;
  border: 1px solid #bdbdbd;
  border-radius: 3px;
}

.tr {
  display: grid;
  grid-template-columns: 19px 20px 65px 152px 65px 65px 65px 151px 150px;
  height: 14px;
  line-height: 16px;
}

.tr span {
  height: 100%;
  padding: 0 3px 0 4px;
  border-right: 1px solid #bfbfbf;
  border-bottom: 1px solid #bfbfbf;
  white-space: nowrap;
}

.tr span:last-child {
  border-right: 0;
}

.tr.th {
  height: 16px;
}

.th span {
  padding: 0;
  text-align: center;
  color: #555;
}

.tr .num {
  text-align: right;
}

.tr .sel {
  background: #b5d3da;
}

.tr.new {
  height: 15px;
}

.new span {
  padding: 0;
  color: #333;
  font-size: 9px;
  text-align: center;
}

.side-tabs {
  padding-top: 12px;
}

.side-tabs div {
  display: grid;
  place-items: center;
  width: 28px;
  height: 25px;
  margin-bottom: 7.500px;
  border: 1px solid #c8c8c8;
  border-left: 0;
  font-size: 9.500px;
  font-weight: 500;
}

.side-tabs div:first-child {
  height: 24px;
  margin-bottom: 4px;
}

.side-tabs .selected {
  background: #c3d5d7;
}

.total {
  display: flex;
  justify-content: flex-end;
  margin: 11px 36px 0 0;
}

.total .field {
  width: 98px;
  margin-left: 7px;
}

.spinner {
  position: absolute;
  left: 364px;
  top: 230px;
}

.support {
  position: absolute;
  left: 8px;
  top: 510px;
  display: grid;
  place-items: center;
  width: 52px;
  height: 52px;
  border-radius: 50%;
  background: #83bde0;
}

.rail {
  display: flex;
  flex-direction: column;
  align-items: center;
  gap: 20px;
  flex: 1;
  padding: 11px 0 11px 4px;
}

.rail-inbox {
  position: relative;
}

.rail-inbox span {
  position: absolute;
  left: 13px;
  top: -6px;
  width: 14px;
  height: 14px;
  border-radius: 50%;
  background: #57bddc;
  color: #fff;
  font-size: 10px;
  line-height: 14px;
  text-align: center;
}

.feed {
  margin-top: auto;
}
```
